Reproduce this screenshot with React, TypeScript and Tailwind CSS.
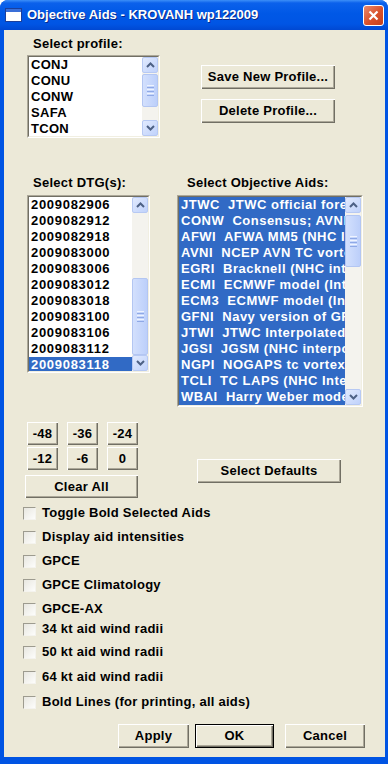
import React from "react";

const aids = [
  "JTWC  JTWC official forecast",
  "CONW  Consensus; AVNI, EGRI, NGPI",
  "AFWI  AFWA MM5 (NHC Interpolated)",
  "AVNI  NCEP AVN TC vortex tracker",
  "EGRI  Bracknell (NHC interpolated)",
  "ECMI  ECMWF model (Interpolated)",
  "ECM3  ECMWF model (Interpolated 12h)",
  "GFNI  Navy version of GFDL",
  "JTWI  JTWC Interpolated forecast",
  "JGSI  JGSM (NHC interpolated)",
  "NGPI  NOGAPS tc vortex tracker",
  "TCLI  TC LAPS (NHC Interpolated)",
  "WBAI  Harry Weber model",
];

const dtgs = [
  "2009082906",
  "2009082912",
  "2009082918",
  "2009083000",
  "2009083006",
  "2009083012",
  "2009083018",
  "2009083100",
  "2009083106",
  "2009083112",
  "2009083118",
];

const profiles = ["CONJ", "CONU", "CONW", "SAFA", "TCON"];

const checks = [
  { label: "Toggle Bold Selected Aids", gap: "mt-[7px]" },
  { label: "Display aid intensities", gap: "mt-[8px]" },
  { label: "GPCE", gap: "mt-[8px]" },
  { label: "GPCE Climatology", gap: "mt-[8px]" },
  { label: "GPCE-AX", gap: "mt-[8px]" },
  { label: "34 kt aid wind radii", gap: "mt-[4px]" },
  { label: "50 kt aid wind radii", gap: "mt-[7px]" },
  { label: "64 kt aid wind radii", gap: "mt-[9px]" },
  { label: "Bold Lines (for printing, all aids)", gap: "mt-[9px]" },
];

function Chevron({ up }: { up?: boolean }) {
  return (
    <svg width="9" height="6" viewBox="0 0 9 6">
      <path
        d={up ? "M1 5 L4.5 1.5 L8 5" : "M1 1 L4.5 4.5 L8 1"}
        fill="none"
        stroke="#4d6185"
        strokeWidth="2"
      />
    </svg>
  );
}

function ScrollButton({ up }: { up?: boolean }) {
  return (
    <div className="flex h-[16px] w-[16px] shrink-0 items-center justify-center rounded-[2px] border border-[#b7c9f3] bg-[linear-gradient(135deg,#e1eafe,#c0d2fb)]">
      <Chevron up={up} />
    </div>
  );
}

function Thumb({ cls }: { cls: string }) {
  return (
    <div
      className={`flex w-[16px] shrink-0 flex-col items-center justify-center gap-[1px] rounded-[2px] border border-[#b3c6f2] bg-[linear-gradient(to_right,#d3e0fd,#bccffa)] ${cls}`}
    >
      <div className="h-[1px] w-[7px] bg-[#eef3fe]" />
      <div className="h-[1px] w-[7px] bg-[#8fa9e6]" />
      <div className="h-[1px] w-[7px] bg-[#eef3fe]" />
      <div className="h-[1px] w-[7px] bg-[#8fa9e6]" />
      <div className="h-[1px] w-[7px] bg-[#eef3fe]" />
      <div className="h-[1px] w-[7px] bg-[#8fa9e6]" />
    </div>
  );
}

function ScrollBar({ spacer, thumb }: { spacer: string; thumb: string }) {
  return (
    <div className="flex w-[16px] shrink-0 flex-col bg-[#f4f3ee]">
      <ScrollButton up />
      <div className={`shrink-0 ${spacer}`} />
      <Thumb cls={thumb} />
      <div className="flex-1" />
      <ScrollButton />
    </div>
  );
}

function Sunken({ cls, children }: { cls: string; children: React.ReactNode }) {
  return (
    <div
      className={`border border-t-[#aca899] border-l-[#aca899] border-r-white border-b-white ${cls}`}
    >
      <div className="flex h-full border border-t-[#716f64] border-l-[#716f64] border-r-[#f1efe2] border-b-[#f1efe2] bg-white">
        {children}
      </div>
    </div>
  );
}

function Button({
  cls,
  children,
  isDefault,
}: {
  cls: string;
  children: React.ReactNode;
  isDefault?: boolean;
}) {
  return (
    <div
      className={`flex shrink-0 items-center justify-center bg-[#ece9d8] text-[13px] font-bold text-black ${
        isDefault
          ? "border border-black shadow-[inset_1px_1px_0_#fff,inset_-1px_-1px_0_#716f64,inset_-2px_-2px_0_#aca899]"
          : "shadow-[inset_1px_1px_0_#fff,inset_-1px_-1px_0_#716f64,inset_-2px_-2px_0_#aca899]"
      } ${cls}`}
    >
      {children}
    </div>
  );
}

export default function App() {
  return (
    <div className="h-[764px] w-[388px] bg-white font-['Liberation_Sans',Arial,sans-serif]">
      <div className="flex h-full w-full flex-col overflow-hidden rounded-t-[8px] bg-[#0054e3]">
        {/* title bar */}
        <div className="flex h-[30px] shrink-0 items-center bg-[linear-gradient(to_bottom,#3d8ff8_0%,#0b61eb_10%,#0058e6_45%,#0055e4_80%,#0048d2_100%)] pl-[5px] pr-[4px]">
          <svg width="17" height="14" viewBox="0 0 17 14" className="shrink-0">
            <rect x="0.5" y="0.5" width="16" height="13" fill="#fff" stroke="#1c3f9a" />
            <rect x="1" y="1" width="15" height="3" fill="#3a6fd8" />
          </svg>
          <span className="ml-[5px] text-[13px] font-bold text-white [text-shadow:1px_1px_0_#0a2a8a]">
            Objective Aids - KROVANH wp122009
          </span>
          <div className="ml-auto flex h-[21px] w-[21px] items-center justify-center rounded-[3px] border border-white bg-[linear-gradient(135deg,#e98a6e,#d9502a_55%,#c4401c)]">
            <svg width="11" height="11" viewBox="0 0 11 11">
              <path d="M1.5 1.5 L9.5 9.5 M9.5 1.5 L1.5 9.5" stroke="#fff" strokeWidth="2.2" />
            </svg>
          </div>
        </div>

        {/* frame + client */}
        <div className="flex flex-1 pl-[4px] pr-[3px] pb-[7px]">
          <div className="flex flex-1 flex-col bg-[#ece9d8] text-[13px] font-bold tracking-[0.25px] text-black">
            {/* profiles */}
            <div className="ml-[23px] flex">
              <div className="flex w-[133px] flex-col">
                <div className="ml-[6px] mt-[6px] h-[16px] leading-[16px]">Select profile:</div>
                <Sunken cls="mt-[3px] h-[83px]">
                  <div className="flex-1 overflow-hidden pl-[2px]">
                    {profiles.map((p) => (
                      <div key={p} className="h-[16px] leading-[16px] tracking-[0.3px]">
                        {p}
                      </div>
                    ))}
                  </div>
                  <ScrollBar spacer="h-[1px]" thumb="h-[33px]" />
                </Sunken>
              </div>
              <div className="ml-[41px] mt-[35px] flex flex-col">
                <Button cls="h-[24px] w-[134px]">Save New Profile...</Button>
                <Button cls="mt-[10px] h-[24px] w-[134px]">Delete Profile...</Button>
              </div>
            </div>

            {/* DTG + aids */}
            <div className="ml-[23px] mt-[37px] flex items-start">
              <div className="flex w-[123px] flex-col">
                <div className="ml-[6px] h-[16px] leading-[16px]">Select DTG(s):</div>
                <Sunken cls="mt-[4px] h-[178px]">
                  <div className="flex-1 overflow-hidden">
                    {dtgs.map((d, i) => (
                      <div
                        key={d}
                        className={`h-[16px] pl-[2px] leading-[16px] tracking-[0.7px] ${
                          i === dtgs.length - 1 ? "bg-[#316ac5] text-white" : ""
                        }`}
                      >
                        {d}
                      </div>
                    ))}
                  </div>
                  <ScrollBar spacer="h-[65px]" thumb="h-[77px]" />
                </Sunken>
              </div>
              <div className="ml-[27px] flex w-[186px] flex-col">
                <div className="ml-[10px] h-[16px] leading-[16px]">Select Objective Aids:</div>
                <Sunken cls="mt-[4px] h-[212px]">
                  <div className="flex-1 overflow-hidden bg-[#316ac5] text-white">
                    {aids.map((a) => (
                      <div
                        key={a}
                        className="h-[16px] whitespace-pre pl-[2px] leading-[16px] tracking-[0.5px]"
                      >
                        {a}
                      </div>
                    ))}
                  </div>
                  <ScrollBar spacer="h-[2px]" thumb="h-[52px]" />
                </Sunken>
              </div>
            </div>

            {/* hour buttons */}
            <div className="ml-[23px] mt-[15px] flex items-start">
              <div className="flex flex-col">
                <div className="flex gap-[9px]">
                  <Button cls="h-[23px] w-[31px]">-48</Button>
                  <Button cls="h-[23px] w-[31px]">-36</Button>
                  <Button cls="h-[23px] w-[31px]">-24</Button>
                </div>
                <div className="mt-[2px] flex gap-[9px]">
                  <Button cls="h-[23px] w-[31px]">-12</Button>
                  <Button cls="h-[23px] w-[31px]">-6</Button>
                  <Button cls="h-[23px] w-[31px]">0</Button>
                </div>
                <Button cls="-ml-[2px] mt-[5px] h-[23px] w-[113px]">Clear All</Button>
              </div>
              <Button cls="ml-[59px] mt-[37px] h-[24px] w-[144px]">Select Defaults</Button>
            </div>

            {/* checkboxes */}
            <div className="ml-[19px] flex flex-col">
              {checks.map((c) => (
                <div key={c.label} className={`flex h-[16px] items-center ${c.gap}`}>
                  <div className="h-[13px] w-[13px] shrink-0 border border-t-[#9d9b8f] border-l-[#9d9b8f] border-r-[#f4f3ee] border-b-[#f4f3ee] bg-[linear-gradient(135deg,#e8e7e0,#fdfdfb)]" />
                  <span className="ml-[6px] leading-[16px]">{c.label}</span>
                </div>
              ))}
            </div>

            {/* bottom buttons */}
            <div className="ml-[114px] mt-[14px] flex">
              <Button cls="h-[24px] w-[71px]">Apply</Button>
              <Button isDefault cls="ml-[6px] h-[24px] w-[79px]">
                OK
              </Button>
              <Button cls="ml-[11px] h-[24px] w-[80px]">Cancel</Button>
            </div>
          </div>
        </div>
      </div>
    </div>
  );
}
